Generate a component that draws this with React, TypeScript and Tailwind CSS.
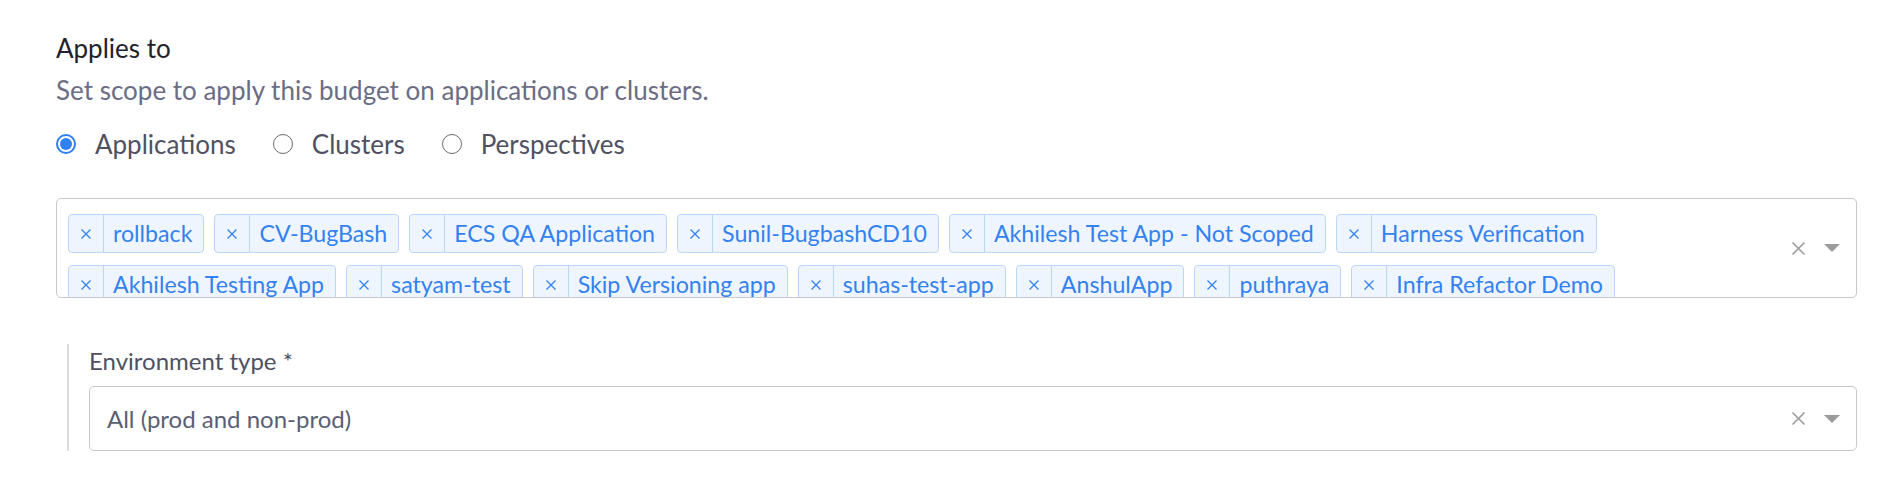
const row1 = [
  "rollback",
  "CV-BugBash",
  "ECS QA Application",
  "Sunil-BugbashCD10",
  "Akhilesh Test App - Not Scoped",
  "Harness Verification",
];

const row2 = [
  "Akhilesh Testing App",
  "satyam-test",
  "Skip Versioning app",
  "suhas-test-app",
  "AnshulApp",
  "puthraya",
  "Infra Refactor Demo",
];

function Tag({ label }: { label: string }) {
  return (
    <div className="flex h-[39px] shrink-0 items-stretch rounded-[4px] border border-[#bcd6fa] bg-[#eef5ff] text-[#3482f0]">
      <div className="flex w-[35px] items-center justify-center border-r border-[#bcd6fa]">
        <svg width="12" height="12" viewBox="0 0 12 12">
          <path d="M1.5 1.5l9 9M10.5 1.5l-9 9" stroke="currentColor" strokeWidth="1.3" />
        </svg>
      </div>
      <div className="flex items-center pl-[9px] pr-[11px] text-[23.2px] leading-none">{label}</div>
    </div>
  );
}

function Controls() {
  return (
    <div className="flex items-center gap-[18px] text-[#9b9b9b]">
      <svg width="15" height="15" viewBox="0 0 15 15">
        <path d="M1.5 1.5l12 12M13.5 1.5l-12 12" stroke="currentColor" strokeWidth="1.6" />
      </svg>
      <svg width="16" height="8" viewBox="0 0 16 8">
        <path d="M0 0h16L8 8z" fill="currentColor" />
      </svg>
    </div>
  );
}

function Radio({ label, checked }: { label: string; checked?: boolean }) {
  return (
    <label className="flex items-center gap-[19px]">
      {checked ? (
        <span className="flex h-[20px] w-[20px] items-center justify-center rounded-full border-2 border-[#2f7ff5] bg-white">
          <span className="h-[12px] w-[12px] rounded-full bg-[#2f7ff5]" />
        </span>
      ) : (
        <span className="h-[20px] w-[20px] rounded-full border-[1.5px] border-[#6b6b6e] bg-white" />
      )}
      <span className="text-[26px] leading-[30px] text-[#4f5162]">{label}</span>
    </label>
  );
}

export default function App() {
  return (
    <div
      className="h-[480px] w-[1884px] bg-white pl-[56px] pr-[27px] pt-[33px]"
      style={{ fontFamily: "Lato, 'Noto Sans', sans-serif" }}
    >
      <div className="text-[26px] leading-[30px] text-[#22222a]">Applies to</div>
      <div className="mt-[12px] text-[26px] leading-[30px] text-[#6b6d85]">
        Set scope to apply this budget on applications or clusters.
      </div>
      <div className="mt-[24px] flex items-center gap-[37px]">
        <Radio label="Applications" checked />
        <Radio label="Clusters" />
        <Radio label="Perspectives" />
      </div>

      <div className="mt-[39px] flex h-[100px] items-start overflow-hidden rounded-[5px] border border-[#c9c9c9] bg-white pl-[11px] pr-[16px]">
        <div className="flex flex-1 flex-col gap-[12px] pt-[15px]">
          <div className="flex gap-[10px]">
            {row1.map((t) => (
              <Tag key={t} label={t} />
            ))}
          </div>
          <div className="flex gap-[10px]">
            {row2.map((t) => (
              <Tag key={t} label={t} />
            ))}
          </div>
        </div>
        <div className="flex h-full items-center">
          <Controls />
        </div>
      </div>

      <div className="ml-[11px] mt-[46px] flex border-l-2 border-[#dcdde3] pl-[20px]">
        <div className="flex-1">
          <div className="mt-[2px] text-[24px] leading-[30px] text-[#4f5162]">Environment type *</div>
          <div className="mt-[10px] flex h-[65px] items-center rounded-[5px] border border-[#c9c9c9] bg-white pl-[17px] pr-[16px]">
            <div className="flex-1 text-[24px] text-[#5b5f74]">All (prod and non-prod)</div>
            <Controls />
          </div>
        </div>
      </div>
    </div>
  );
}
